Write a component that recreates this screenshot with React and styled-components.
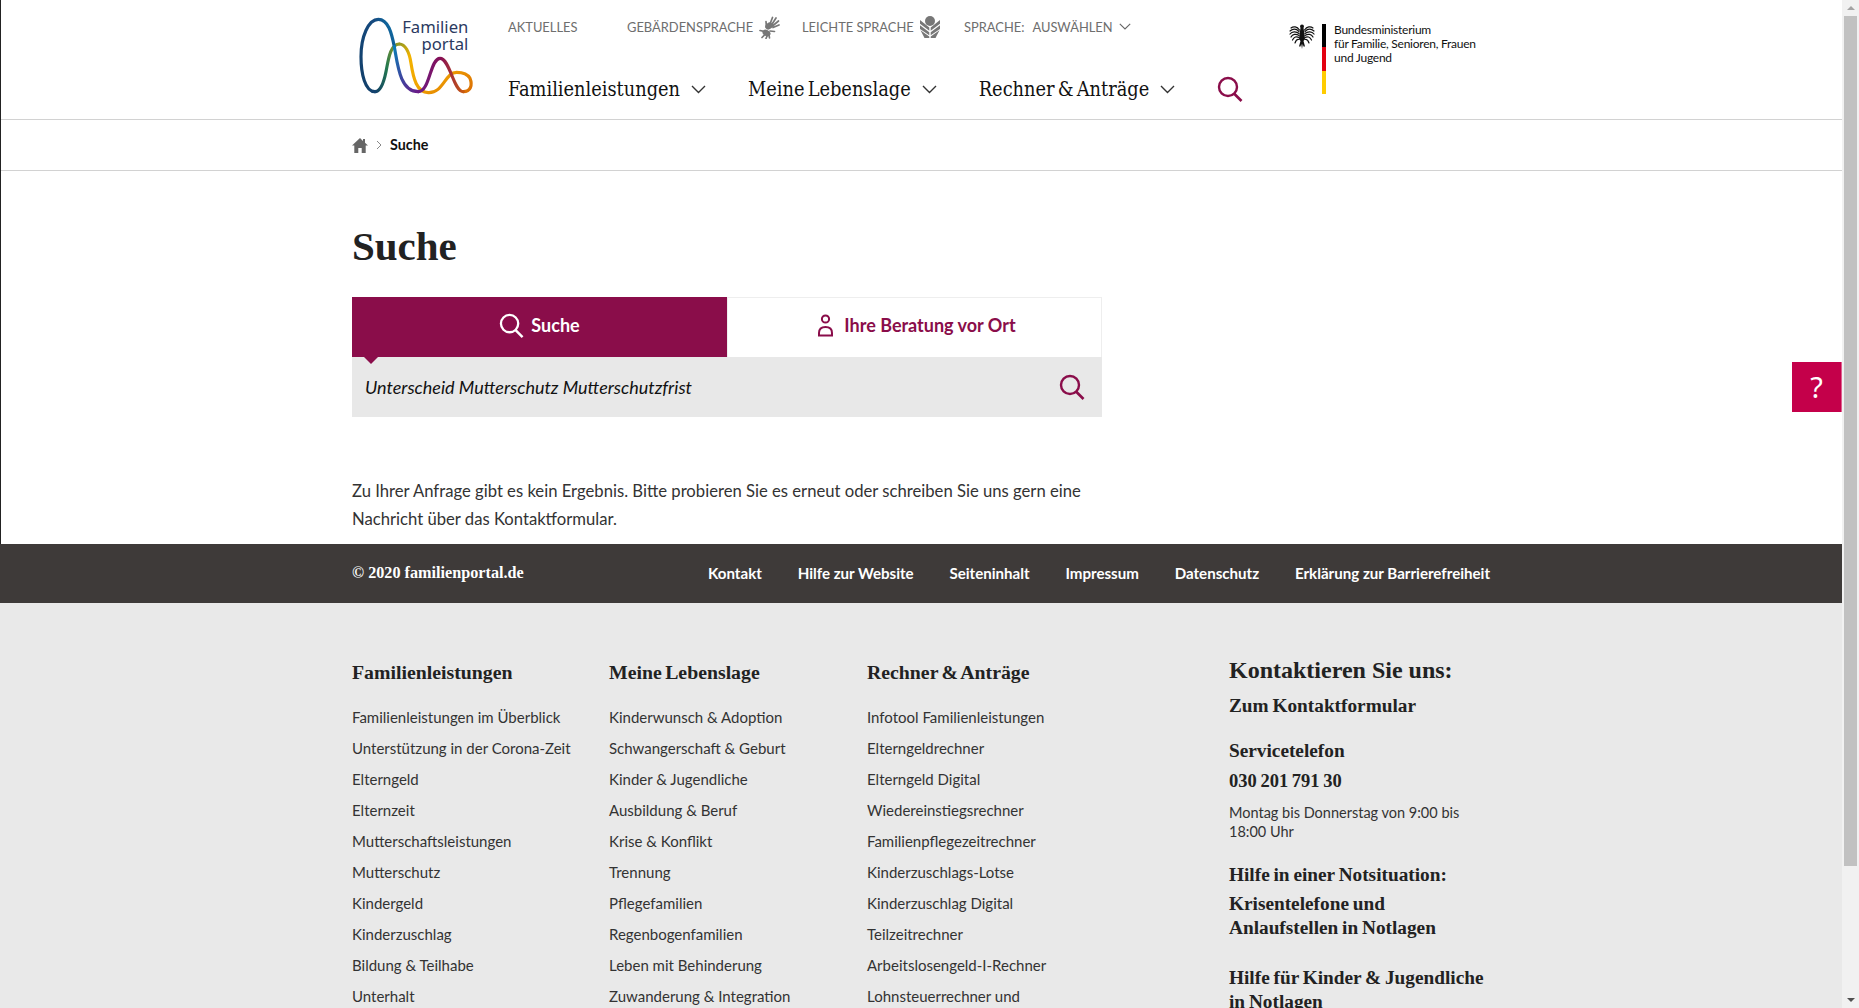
import React from "react";
import styled, { createGlobalStyle } from "styled-components";

const SANS = `Lato, "Noto Sans", sans-serif`;
const SERIF = `"DejaVu Serif Condensed", "DejaVu Serif", serif`;
const SERIF_BOLD = `"Liberation Serif", serif`;
const MAROON = "#8a0d4a";

const footerColumns = [
  {
    title: "Familienleistungen",
    links: ["Familienleistungen im Überblick", "Unterstützung in der Corona-Zeit", "Elterngeld", "Elternzeit", "Mutterschaftsleistungen", "Mutterschutz", "Kindergeld", "Kinderzuschlag", "Bildung & Teilhabe", "Unterhalt"],
  },
  {
    title: "Meine Lebenslage",
    links: ["Kinderwunsch & Adoption", "Schwangerschaft & Geburt", "Kinder & Jugendliche", "Ausbildung & Beruf", "Krise & Konflikt", "Trennung", "Pflegefamilien", "Regenbogenfamilien", "Leben mit Behinderung", "Zuwanderung & Integration"],
  },
  {
    title: "Rechner & Anträge",
    links: ["Infotool Familienleistungen", "Elterngeldrechner", "Elterngeld Digital", "Wiedereinstiegsrechner", "Familienpflegezeitrechner", "Kinderzuschlags-Lotse", "Kinderzuschlag Digital", "Teilzeitrechner", "Arbeitslosengeld-I-Rechner", "Lohnsteuerrechner und"],
  },
];

const barLinks = ["Kontakt", "Hilfe zur Website", "Seiteninhalt", "Impressum", "Datenschutz", "Erklärung zur Barrierefreiheit"];

const Chevron = ({ size = 15, color = "#333" }) => (
  <svg width={size} height={size * 0.6} viewBox="0 0 15 9" fill="none">
    <path d="M1 1l6.5 6.5L14 1" stroke={color} strokeWidth="1.4" />
  </svg>
);

const SearchIcon = ({ size = 26, color = MAROON }) => (
  <svg width={size} height={size} viewBox="0 0 26 26" fill="none">
    <circle cx="11" cy="11" r="9" stroke={color} strokeWidth="2.4" />
    <path d="M17 17.500l7.500 7.500" stroke={color} strokeWidth="2.600" />
  </svg>
);

const PersonIcon = () => (
  <svg width="17" height="23" viewBox="0 0 17 23" fill="none">
    <circle cx="8.500" cy="5" r="3.600" stroke={MAROON} strokeWidth="2" />
    <path d="M2 21.500v-2.500c0-4 2.800-6 6.500-6s6.500 2 6.500 6v2.500z" stroke={MAROON} strokeWidth="2" />
  </svg>
);

const HomeIcon = () => (
  <svg width="16" height="15" viewBox="0 0 16 15">
    <path d="M8 0L0 7.500h2.300V15h4v-5h3.400v5h4V7.500H16l-3-2.800V1h-2v1.900z" fill="#666" />
  </svg>
);

const HandsIcon = () => (
  <svg width="21" height="24" viewBox="0 0 21 24" fill="none" stroke="#777" strokeLinecap="round">
    <ellipse cx="10" cy="11" rx="4" ry="3.200" fill="#777" strokeWidth="0" transform="rotate(-35 10 11)" />
    <path strokeWidth="1.700" d="M11 9L13.500 2.500M12.500 10L17 3M13.500 11L19.500 6M14 12.500L20 10M7.500 12.500L7 6.500" />
    <ellipse cx="7.500" cy="18" rx="4.200" ry="3" fill="#777" strokeWidth="0" transform="rotate(25 7.500 18)" />
    <path strokeWidth="1.700" d="M5 16.500L1 15.500M6 19.500L3 22.500M8.500 20L7 23.500M10 19.500L10.500 23M11 16L15.500 16.500" />
  </svg>
);

const WheatIcon = () => (
  <svg width="20" height="22" viewBox="0 0 20 22" fill="#777">
    <circle cx="10" cy="5" r="5" />
    <path d="M0 4l9.300 7.500v3.300L0 7.800zM20 4l-9.300 7.500v3.300L20 7.800zM0 9.300l9.300 6.900v3L0 13zM20 9.300l-9.300 6.900v3L20 13zM.5 14.300l8.800 6.300V22H4.500zM19.500 14.300l-8.800 6.300V22h4.800z" />
  </svg>
);

const FamilyLogo = () => (
  <svg width="130" height="90" viewBox="0 0 390 270" fill="none">
    <defs>
      <linearGradient id="logoA" x1="0" y1="1" x2="1" y2="0">
        <stop offset="0" stopColor="#123f68" />
        <stop offset="0.7" stopColor="#154a80" />
        <stop offset="1" stopColor="#0a7cb4" />
      </linearGradient>
      <linearGradient id="logoB" x1="0" y1="0" x2="1" y2="1">
        <stop offset="0" stopColor="#0a7cb4" />
        <stop offset="0.5" stopColor="#3d46a0" />
        <stop offset="1" stopColor="#6a1c88" />
      </linearGradient>
      <linearGradient id="logoC" x1="0" y1="0" x2="1" y2="0">
        <stop offset="0" stopColor="#6a1c88" />
        <stop offset="0.5" stopColor="#860f55" />
        <stop offset="1" stopColor="#c95a10" />
      </linearGradient>
      <linearGradient id="logoD" x1="1" y1="1" x2="0" y2="0">
        <stop offset="0" stopColor="#d96c05" />
        <stop offset="0.4" stopColor="#f0a200" />
        <stop offset="0.8" stopColor="#f3b300" />
        <stop offset="1" stopColor="#9a9a20" />
      </linearGradient>
      <linearGradient id="logoE" x1="1" y1="0" x2="0" y2="1">
        <stop offset="0" stopColor="#9a9a20" />
        <stop offset="0.5" stopColor="#23794f" />
        <stop offset="1" stopColor="#123f68" />
      </linearGradient>
    </defs>
    <g strokeWidth="9.500" strokeLinecap="round">
      <path stroke="url(#logoD)" d="M340 245C362 245 368 225 360 205C352 190 335 187 320 187C285 187 280 250 235 248C200 247 190 205 183 160C178 125 165 102 148 102" />
      <path stroke="url(#logoE)" d="M148 102C120 102 115 150 108 185C100 225 90 245 75 245" />
      <path stroke="url(#logoA)" d="M75 245C45 245 33 190 33 140C33 80 55 28 85 28C115 28 125 70 133 110" />
      <path stroke="url(#logoB)" d="M133 110C143 165 150 245 205 245" />
      <path stroke="url(#logoC)" d="M205 245C240 245 240 145 270 145C300 145 310 245 340 245" />
    </g>
    <LogoText x="355" y="68">Familien</LogoText>
    <LogoText x="355" y="120">portal</LogoText>
  </svg>
);

const Eagle = () => (
  <svg width="26" height="27" viewBox="0 0 26 27" fill="#111" stroke="#111" strokeLinecap="round">
    <circle cx="13" cy="3.500" r="2" stroke="none" />
    <path stroke="none" d="M11.500 5h3l.8 5 .7 6-1.500 2 1.500 5.500h-1.500L13.800 21l-.8 5-.8-5-.7 2.500h-1.500l1.500-5.500L10 16l.7-6z" />
    <path strokeWidth="1.200" fill="none" d="M10.500 7C8 3.500 4.500 3 2 5M15.500 7C18 3.500 21.500 3 24 5M10 8.500C7 5.500 3.500 6 1 8M16 8.500C19 5.500 22.500 6 25 8M10 10.500C7 8 3 8.500 1 11M16 10.500C19 8 23 8.500 25 11M10 12.500C7 10.500 3.500 11 2 14M16 12.500C19 10.500 22.500 11 24 14M10 14.500C7.500 13 5 14 3.500 17M16 14.500C18.500 13 21 14 22.500 17M10 16.500C8.500 16 7 17 6 20M16 16.500C17.500 16 19 17 20 20" />
  </svg>
);

export default function App() {
  return (
    <>
      <GlobalStyle />
      <Window>
        <Page>
          <WhiteArea>
            <Header>
              <LogoSlot>
                <FamilyLogo />
              </LogoSlot>
              <NavColumn>
                <TopNav>
                  <TopLink $width={119}>AKTUELLES</TopLink>
                  <TopLink $width={175}>
                    GEBÄRDENSPRACHE
                    <HandsIcon />
                  </TopLink>
                  <TopLink $width={162}>
                    LEICHTE SPRACHE
                    <WheatIcon />
                  </TopLink>
                  <TopLink>
                    SPRACHE:
                    <LanguageValue>AUSWÄHLEN</LanguageValue>
                    <Chevron size={12} color="#666" />
                  </TopLink>
                </TopNav>
                <MainNav>
                  <MainLink>
                    Familienleistungen
                    <Chevron />
                  </MainLink>
                  <MainLink>
                    Meine Lebenslage
                    <Chevron />
                  </MainLink>
                  <MainLink>
                    Rechner &amp; Anträge
                    <Chevron />
                  </MainLink>
                  <NavSearch>
                    <SearchIcon />
                  </NavSearch>
                </MainNav>
              </NavColumn>
              <Ministry>
                <Eagle />
                <FlagBar />
                <MinistryName>
                  Bundesministerium
                  <br />
                  für Familie, Senioren, Frauen
                  <br />
                  und Jugend
                </MinistryName>
              </Ministry>
            </Header>
            <Breadcrumb>
              <HomeIcon />
              <CrumbArrow>
                <svg width="6" height="10" viewBox="0 0 6 10" fill="none">
                  <path d="M1 1l4 4-4 4" stroke="#888" strokeWidth="1" />
                </svg>
              </CrumbArrow>
              <CrumbCurrent>Suche</CrumbCurrent>
            </Breadcrumb>
            <Content>
              <Title>Suche</Title>
              <SearchPanel>
                <Tabs>
                  <Tab $active>
                    <SearchIcon color="#fff" size={25} />
                    Suche
                  </Tab>
                  <Tab>
                    <PersonIcon />
                    Ihre Beratung vor Ort
                  </Tab>
                </Tabs>
                <SearchField>
                  <SearchValue>Unterscheid Mutterschutz Mutterschutzfrist</SearchValue>
                  <SearchIcon />
                </SearchField>
              </SearchPanel>
              <Message>
                Zu Ihrer Anfrage gibt es kein Ergebnis. Bitte probieren Sie es erneut oder schreiben Sie uns gern eine
                <br />
                Nachricht über das Kontaktformular.
              </Message>
            </Content>
            <HelpButton>?</HelpButton>
          </WhiteArea>
          <DarkBar>
            <Copyright>© 2020 familienportal.de</Copyright>
            <BarLinks>
              {barLinks.map((link) => (
                <BarLink key={link}>{link}</BarLink>
              ))}
            </BarLinks>
          </DarkBar>
          <Footer>
            <FooterColumns>
              {footerColumns.map((col) => (
                <FooterColumn key={col.title}>
                  <ColumnTitle>{col.title}</ColumnTitle>
                  {col.links.map((link) => (
                    <FooterLink key={link}>{link}</FooterLink>
                  ))}
                </FooterColumn>
              ))}
            </FooterColumns>
            <Contact>
              <ContactTitle>Kontaktieren Sie uns:</ContactTitle>
              <ContactLine $after={21}>Zum Kontaktformular</ContactLine>
              <ContactLine $after={6}>Servicetelefon</ContactLine>
              <ContactLine $after={10} $size={18.5}>030 201 791 30</ContactLine>
              <Hours>
                Montag bis Donnerstag von 9:00 bis
                <br />
                18:00 Uhr
              </Hours>
              <ContactLine $after={5}>Hilfe in einer Notsituation:</ContactLine>
              <ContactLine $after={26}>
                Krisentelefone und
                <br />
                Anlaufstellen in Notlagen
              </ContactLine>
              <ContactLine>
                Hilfe für Kinder &amp; Jugendliche
                <br />
                in Notlagen
              </ContactLine>
            </Contact>
          </Footer>
        </Page>
        <Scrollbar>
          <ScrollArrow />
          <ScrollThumb />
          <ScrollArrow $down />
        </Scrollbar>
      </Window>
    </>
  );
}

const GlobalStyle = createGlobalStyle`
  html, body {
    margin: 0;
    height: 100%;
    overflow: hidden;
  }
  body {
    font-family: ${SANS};
    color: #222;
    background: #fff;
  }
`;

const Window = styled.div`
  display: flex;
  height: 100vh;
  overflow: hidden;
`;

const Page = styled.div`
  flex: 1;
  min-width: 0;
  overflow: hidden;
`;

const WhiteArea = styled.div`
  position: relative;
  height: 544px;
  border-left: 1px solid #222;
`;

const Header = styled.header`
  display: flex;
  height: 119px;
  padding-left: 349px;
  border-bottom: 1px solid #d2d2d2;
`;

const LogoSlot = styled.div`
  width: 158px;
  padding-top: 10px;
`;

const LogoText = styled.text`
  font-family: "Noto Sans", sans-serif;
  font-size: 50px;
  fill: #2b3a5f;
  text-anchor: end;
`;

const NavColumn = styled.div`
  width: 781px;
`;

const TopNav = styled.div`
  display: flex;
  align-items: center;
  height: 54px;
`;

const TopLink = styled.span`
  display: flex;
  align-items: center;
  gap: 6px;
  width: ${(p) => (p.$width ? `${p.$width}px` : "auto")};
  font-size: 12.900px;
  color: #6e6e6e;
`;

const LanguageValue = styled.span`
  margin-left: 2px;
`;

const MainNav = styled.nav`
  display: flex;
  align-items: center;
  gap: 42px;
  height: 71px;
`;

const MainLink = styled.span`
  display: flex;
  align-items: center;
  gap: 11px;
  font-family: ${SERIF};
  font-size: 19.800px;
  word-spacing: -2.500px;
  color: #111;
`;

const NavSearch = styled.span`
  display: flex;
  margin-bottom: 2px;
`;

const Ministry = styled.div`
  display: flex;
  align-items: flex-start;
  padding-top: 23px;
`;

const FlagBar = styled.div`
  width: 4px;
  height: 70px;
  margin: 1px 8px 0 7px;
  background: linear-gradient(#000 0 33.3%, #e3000f 33.3% 66.6%, #ffcc00 66.6%);
`;

const MinistryName = styled.div`
  font-family: Lato, sans-serif;
  font-size: 12px;
  line-height: 14px;
  letter-spacing: -0.25px;
  color: #111;
`;

const Breadcrumb = styled.div`
  display: flex;
  align-items: center;
  height: 50px;
  padding-left: 351px;
  border-bottom: 1px solid #d2d2d2;
`;

const CrumbArrow = styled.span`
  display: flex;
  margin: 0 8px 0 8px;
`;

const CrumbCurrent = styled.span`
  font-size: 14.300px;
  font-weight: 700;
  color: #111;
  margin-bottom: 2px;
`;

const Content = styled.main`
  padding: 0 0 0 351px;
`;

const Title = styled.h1`
  margin: 0;
  padding-top: 49px;
  height: 126px;
  box-sizing: border-box;
  font-family: ${SERIF_BOLD};
  font-size: 41px;
  line-height: 52px;
  font-weight: 700;
  color: #222;
`;

const SearchPanel = styled.div`
  width: 750px;
`;

const Tabs = styled.div`
  display: flex;
  height: 60px;
`;

const Tab = styled.div`
  position: relative;
  flex: 0 0 50%;
  display: flex;
  align-items: center;
  justify-content: center;
  gap: ${(p) => (p.$active ? 7 : 10)}px;
  box-sizing: border-box;
  padding: ${(p) => (p.$active ? "0 0 4px" : "0 0 5px 4px")};
  font-size: 18px;
  font-weight: 700;
  color: ${(p) => (p.$active ? "#fff" : MAROON)};
  background: ${(p) => (p.$active ? MAROON : "#fff")};
  border: ${(p) => (p.$active ? "none" : "1px solid #eee")};
  border-bottom: none;

  &::after {
    content: "";
    display: ${(p) => (p.$active ? "block" : "none")};
    position: absolute;
    left: 12px;
    top: 100%;
    border: 7px solid transparent;
    border-top-color: ${MAROON};
    border-bottom: none;
  }
`;

const SearchField = styled.div`
  display: flex;
  align-items: center;
  justify-content: space-between;
  height: 60px;
  padding: 0 17px 0 13px;
  background: #e8e8e8;
`;

const SearchValue = styled.span`
  font-size: 18px;
  font-style: italic;
  color: #111;
`;

const Message = styled.p`
  margin: 0;
  padding-top: 60px;
  font-size: 16.660px;
  line-height: 28px;
  color: #333;
`;

const HelpButton = styled.div`
  position: absolute;
  left: 1791px;
  top: 362px;
  width: 50px;
  height: 50px;
  display: flex;
  align-items: center;
  justify-content: center;
  box-sizing: border-box;
  padding-bottom: 2px;
  background: #c4004a;
  border-right: 1px solid #e0608f;
  color: #fff;
  font-family: "Noto Sans", sans-serif;
  font-size: 29px;
`;

const DarkBar = styled.div`
  display: flex;
  align-items: center;
  height: 59px;
  box-sizing: border-box;
  padding: 0 0 2px 352px;
  background: #3e3a39;
  color: #fff;
`;

const Copyright = styled.span`
  width: 356px;
  font-family: ${SERIF_BOLD};
  font-size: 16.200px;
  font-weight: 700;
  margin-top: 1px;
`;

const BarLinks = styled.div`
  display: flex;
  gap: 35.800px;
`;

const BarLink = styled.span`
  font-size: 15.100px;
  font-weight: 700;
`;

const Footer = styled.footer`
  display: flex;
  padding: 57px 0 0 352px;
  background: #e9e9e9;
  height: 405px;
  box-sizing: border-box;
`;

const FooterColumns = styled.div`
  display: grid;
  grid-template-columns: 257px 258px 362px;
`;

const FooterColumn = styled.div`
  display: flex;
  flex-direction: column;
`;

const ColumnTitle = styled.div`
  height: 42px;
  font-family: ${SERIF_BOLD};
  font-size: 19.800px;
  line-height: 24px;
  font-weight: 700;
  word-spacing: -1.500px;
  color: #222;
`;

const FooterLink = styled.div`
  font-size: 15px;
  line-height: 31px;
  color: #333;
`;

const Contact = styled.div`
  width: 270px;
  font-family: ${SERIF_BOLD};
  color: #222;
  margin-top: -5px;
`;

const ContactTitle = styled.div`
  font-size: 24px;
  line-height: 30px;
  font-weight: 700;
  margin-bottom: 9px;
`;

const ContactLine = styled.div`
  font-size: ${(p) => p.$size || 19.3}px;
  line-height: 24px;
  font-weight: 700;
  word-spacing: -1px;
  margin-bottom: ${(p) => p.$after || 0}px;
`;

const Hours = styled.div`
  font-family: ${SANS};
  font-size: 14.500px;
  line-height: 19px;
  color: #333;
  margin-bottom: 22px;
`;

const Scrollbar = styled.div`
  width: 17px;
  flex: none;
  display: flex;
  flex-direction: column;
  align-items: center;
  background: #f1f1f1;
`;

const ScrollArrow = styled.div`
  height: 16px;
  width: 100%;
  display: flex;
  align-items: center;
  justify-content: center;
  margin-top: ${(p) => (p.$down ? "auto" : 0)};

  &::before {
    content: "";
    border: 4px solid transparent;
    border-top: ${(p) => (p.$down ? "4px solid #505050" : "none")};
    border-bottom: ${(p) => (p.$down ? "none" : "4px solid #a3a3a3")};
  }
`;

const ScrollThumb = styled.div`
  width: 13px;
  height: 850px;
  background: #c1c1c1;
`;
